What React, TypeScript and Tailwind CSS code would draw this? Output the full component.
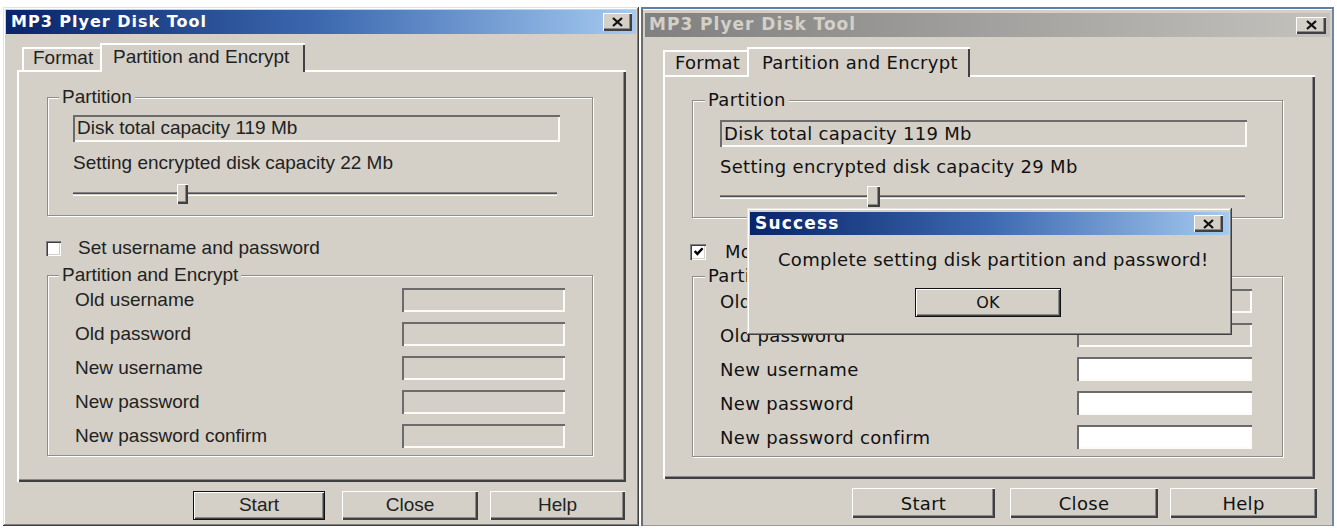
import React from 'react';

// Win2000-style bevels, drawn as inset shadows so they never take layout space
const FACE = 'bg-[#d4d0c8]';
const FRAME =
  'bg-[#d4d0c8] shadow-[inset_-1px_-1px_0_#404040,inset_1px_1px_0_#e4e2dd,inset_-2px_-2px_0_#808080,inset_2px_2px_0_#ffffff]';
const FRAME_BLUE =
  'bg-[#d4d0c8] shadow-[inset_0_2px_0_#5f7fa8,inset_-2px_0_0_#6f86a6,inset_2px_0_0_#6d6d6d,inset_0_-1px_0_#9a9a9a,inset_0_3px_0_#ffffff]';
const RAISED =
  'bg-[#d4d0c8] shadow-[inset_1px_1px_0_#ffffff,inset_-2px_-2px_0_#404040,inset_-3px_-3px_0_#8a8a8a]';
const DEFAULT_BTN =
  'bg-[#d4d0c8] shadow-[inset_0_0_0_1px_#111111,inset_2px_2px_0_#ffffff,inset_-2px_-2px_0_#404040,inset_-3px_-3px_0_#8a8a8a]';
const SUNKEN = 'shadow-[inset_2px_2px_0_#6b6b6b,inset_-2px_-2px_0_#fbfbf8]';
const ETCHED = 'border border-[#8f8d88] shadow-[inset_1px_1px_0_#ffffff,1px_1px_0_#ffffff]';
const PANEL =
  'bg-[#d4d0c8] shadow-[inset_2px_2px_0_#ffffff,inset_-2px_-2px_0_#404040,inset_-3px_-3px_0_#8a8a8a]';

const ROWS = ['Old username', 'Old password', 'New username', 'New password', 'New password confirm'];

function CloseBox({ className = '' }: { className?: string }) {
  return (
    <div className={`flex items-center justify-center ${RAISED} ${className}`}>
      <svg viewBox="0 0 12 10" className="h-[10px] w-[13px]">
        <path d="M1.5 1 L10.5 9 M10.5 1 L1.5 9" stroke="#111" strokeWidth="2.3" />
      </svg>
    </div>
  );
}

function Btn({ children, className = '', def }: { children: React.ReactNode; className?: string; def?: boolean }) {
  return (
    <div className={`flex items-center justify-center ${def ? DEFAULT_BTN : RAISED} ${className}`}>{children}</div>
  );
}

function Slider({ className, thumb }: { className: string; thumb: string }) {
  return (
    <div className={`relative flex ${className}`}>
      <div className="absolute inset-x-0 top-1/2 h-[4px] -translate-y-1/2 shadow-[inset_0_1px_0_#808080,inset_0_2px_0_#505050,inset_0_-1px_0_#ffffff]" />
      <div className={`relative h-full ${RAISED} ${thumb}`} />
    </div>
  );
}

function CheckBox({ checked, className }: { checked?: boolean; className: string }) {
  return (
    <div
      className={`flex items-center justify-center bg-white shadow-[inset_1px_1px_0_#808080,inset_2px_2px_0_#404040,inset_-1px_-1px_0_#ffffff,inset_-2px_-2px_0_#d4d0c8] ${className}`}
    >
      {checked && (
        <svg viewBox="0 0 10 10" className="h-[11px] w-[11px]">
          <path d="M1.5 4.5 L4 7.2 L8.7 2" fill="none" stroke="#000" strokeWidth="2.2" />
        </svg>
      )}
    </div>
  );
}

function Group({
  label,
  className,
  legend,
  children,
}: {
  label: string;
  className: string;
  legend: string;
  children: React.ReactNode;
}) {
  return (
    <fieldset className={`${ETCHED} ${className}`}>
      <legend className={`${FACE} px-[3px] leading-[18px] ${legend}`}>{label}</legend>
      {children}
    </fieldset>
  );
}

function LeftDialog() {
  return (
    <section
      className={`ml-[3px] mt-[7px] flex h-[519px] w-[636px] shrink-0 flex-col ${FRAME} font-['Liberation_Sans',Arial,sans-serif] text-[19px] text-[#222222]`}
    >
      <div className="mx-[3px] mt-[3px] flex h-[24px] items-center bg-linear-to-r from-[#0a246a] via-[#3d69b0] to-[#a6caf0] pl-[5px] pr-[4px]">
        <span className="font-['DejaVu_Sans',sans-serif] text-[16px] font-bold tracking-[1px] text-white">
          MP3 Plyer Disk Tool
        </span>
        <CloseBox className="ml-auto h-[18px] w-[29px]" />
      </div>

      <div className="ml-[19px] mt-[9px] flex h-[27px] items-end">
        <div className="flex h-[23px] w-[78px] items-center pl-[11px] shadow-[inset_2px_2px_0_#ffffff]">Format</div>
        <div
          className={`relative z-10 -mb-[2px] flex h-[29px] w-[205px] items-center pl-[13px] ${FACE} shadow-[inset_2px_2px_0_#ffffff,inset_-2px_0_0_#404040]`}
        >
          Partition and Encrypt
        </div>
      </div>

      <div className={`ml-[14px] flex h-[412px] w-[609px] flex-col ${PANEL}`}>
        <Group label="Partition" className="ml-[30px] mt-[18px] w-[546px] pb-[11px]" legend="ml-[11px]">
          <div className={`ml-[25px] mt-[9px] flex h-[27px] w-[487px] items-center pl-[4px] ${SUNKEN}`}>
            Disk total capacity 119 Mb
          </div>
          <div className="ml-[25px] mt-[11px] h-[20px] leading-[20px]">Setting encrypted disk capacity 22 Mb</div>
          <Slider className="ml-[25px] mt-[11px] h-[20px] w-[484px]" thumb="ml-[104px] w-[11px]" />
        </Group>

        <div className="ml-[29px] mt-[25px] flex h-[15px] items-center">
          <CheckBox className="h-[15px] w-[15px]" />
          <span className="ml-[17px]">Set username and password</span>
        </div>

        <Group label="Partition and Encrypt" className="ml-[30px] mt-[10px] w-[546px] pb-[7px]" legend="ml-[11px]">
          <div className="mt-[4px] flex flex-col gap-[10px]">
            {ROWS.map((r) => (
              <div key={r} className="flex h-[24px] items-center justify-between pl-[27px] pr-[27px]">
                <span>{r}</span>
                <div className={`h-[24px] w-[163px] ${FACE} ${SUNKEN}`} />
              </div>
            ))}
          </div>
        </Group>
      </div>

      <div className="ml-[190px] mt-[9px] flex h-[29px]">
        <Btn def className="w-[132px]">
          Start
        </Btn>
        <Btn className="ml-[17px] w-[136px]">Close</Btn>
        <Btn className="ml-[12px] w-[135px]">Help</Btn>
      </div>
    </section>
  );
}

function RightDialog() {
  return (
    <section
      className={`ml-[2px] mt-[7px] flex h-[519px] w-[693px] shrink-0 flex-col ${FRAME_BLUE} font-['DejaVu_Sans',sans-serif] text-[18px] tracking-[0.3px] text-[#111111]`}
    >
      <div className="mx-[4px] mt-[6px] flex h-[24px] items-center bg-linear-to-r from-[#808080] to-[#c4c2bd] pl-[4px] pr-[4px]">
        <span className="text-[17px] font-bold tracking-[1px] text-[#d4d0c8]">MP3 Plyer Disk Tool</span>
        <CloseBox className="ml-auto h-[17px] w-[30px]" />
      </div>

      <div className="ml-[22px] mt-[10px] flex h-[28px] items-end">
        <div className="flex h-[25px] w-[84px] items-center pl-[12px] shadow-[inset_2px_2px_0_#ffffff]">Format</div>
        <div
          className={`relative z-10 -mb-[2px] flex h-[30px] w-[223px] items-center pl-[15px] ${FACE} shadow-[inset_2px_2px_0_#ffffff,inset_-2px_0_0_#404040]`}
        >
          Partition and Encrypt
        </div>
      </div>

      <div className={`ml-[22px] flex h-[404px] w-[652px] flex-col ${PANEL}`}>
        <Group label="Partition" className="ml-[29px] mt-[16px] w-[591px] pb-[10px]" legend="ml-[12px]">
          <div className={`ml-[27px] mt-[11px] flex h-[27px] w-[527px] items-center pl-[4px] ${SUNKEN}`}>
            Disk total capacity 119 Mb
          </div>
          <div className="ml-[27px] mt-[10px] h-[20px] leading-[20px]">Setting encrypted disk capacity 29 Mb</div>
          <Slider className="ml-[27px] mt-[9px] h-[21px] w-[525px]" thumb="ml-[147px] w-[13px]" />
        </Group>

        <div className="ml-[27px] mt-[26px] flex h-[15px] items-center">
          <CheckBox checked className="h-[16px] w-[16px]" />
          <span className="ml-[19px]">Modify username and password</span>
        </div>

        <Group label="Partition and Encrypt" className="ml-[29px] mt-[8px] w-[591px] pb-[7px]" legend="ml-[12px]">
          <div className="mt-[4px] flex flex-col gap-[10px]">
            {ROWS.map((r, i) => (
              <div key={r} className="flex h-[24px] items-center justify-between pl-[27px] pr-[30px]">
                <span>{r}</span>
                <div className={`h-[24px] w-[175px] ${i < 2 ? FACE : 'bg-white'} ${SUNKEN}`} />
              </div>
            ))}
          </div>
        </Group>
      </div>

      <div className="ml-[211px] mt-[9px] flex h-[30px]">
        <Btn className="w-[143px]">Start</Btn>
        <Btn className="ml-[15px] w-[148px]">Close</Btn>
        <Btn className="ml-[12px] w-[147px]">Help</Btn>
      </div>
    </section>
  );
}

function SuccessBox() {
  return (
    <div
      className={`absolute left-[747px] top-[208px] z-20 flex h-[127px] w-[485px] flex-col ${FRAME} font-['DejaVu_Sans',sans-serif] text-[18px] tracking-[0.3px] text-[#111111]`}
    >
      <div className="mx-[3px] mt-[4px] flex h-[23px] items-center bg-linear-to-r from-[#0a246a] via-[#3d69b0] to-[#a6caf0] pl-[5px] pr-[6px]">
        <span className="text-[17px] font-bold tracking-[1.2px] text-white">Success</span>
        <CloseBox className="ml-auto h-[17px] w-[29px]" />
      </div>
      <div className="ml-[31px] mt-[14px] h-[22px] leading-[22px]">Complete setting disk partition and password!</div>
      <Btn def className="ml-[168px] mt-[17px] h-[29px] w-[146px] text-[16px]">
        OK
      </Btn>
    </div>
  );
}

export default function App() {
  return (
    <div className="relative flex h-[529px] w-[1337px] overflow-hidden bg-white">
      <LeftDialog />
      <RightDialog />
      <SuccessBox />
    </div>
  );
}
